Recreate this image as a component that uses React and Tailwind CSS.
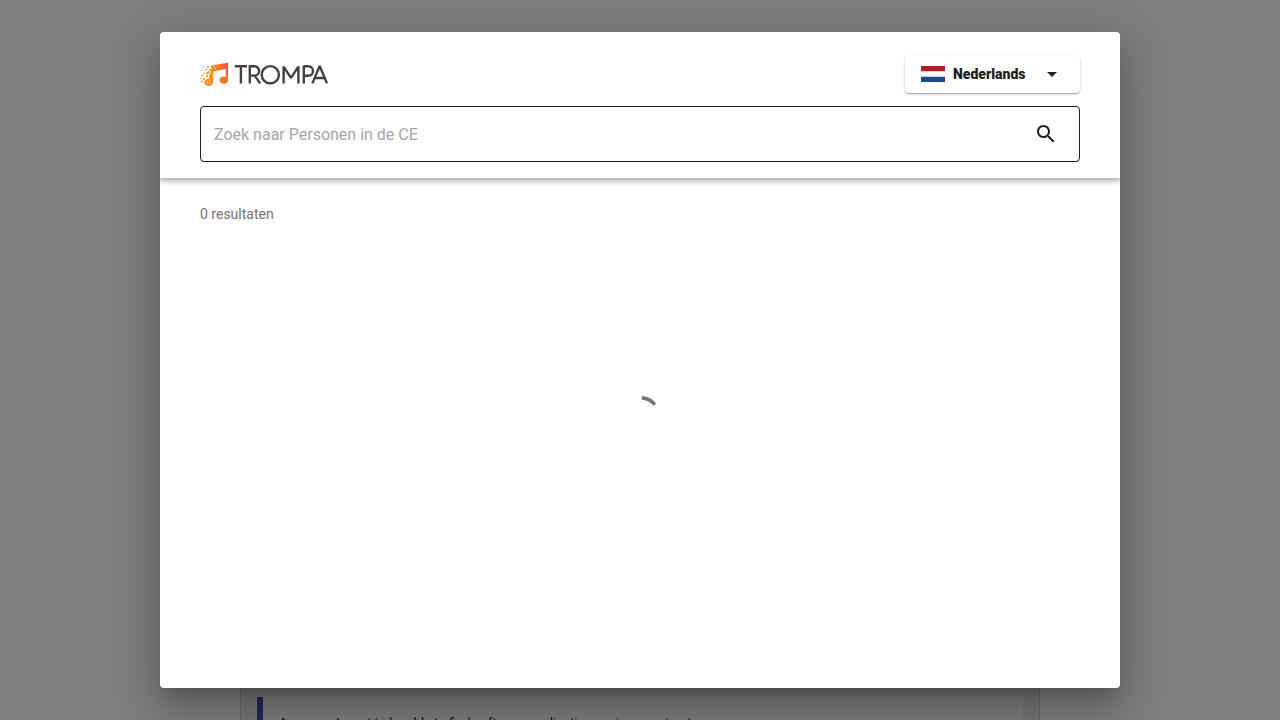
import React from "react";

function Logo() {
  return (
    <svg viewBox="0 0 128 24" className="h-6 w-32" role="img" aria-label="TROMPA">
      <defs>
        <linearGradient id="note" x1="0" y1="0.6" x2="1" y2="0.3">
          <stop offset="0" stopColor="#fd9a10" />
          <stop offset="0.5" stopColor="#fb8424" />
          <stop offset="1" stopColor="#f65a34" />
        </linearGradient>
      </defs>
      <path
        fill="url(#note)"
        d="M11 3.6 28 .8v17.7a4.3 3.7 0 1 1-2.2-3.6V7L13.2 9.6v10.2a4.5 4.2 0 0 1-8.8 1.2c-.4-2.6 1.8-4.4 4.4-4.6l1.2-6.4 1-1z"
      />
      <path
        fill="#fba02a"
        d="M7 4h2v2H7zM9 7h2v2H9zM5 7h2v1H5zM3 5h1v1H3zM1 8h1v1H1zM6 10h2v2H6zM3 11h2v1H3zM1 13h2v1H1zM6 13h2v2H6zM0 16h1v1H0zM3 16h2v2H3zM1 19h2v1H1zM4 20h2v2H4zM8 9h1v3H8z"
      />
      <path fill="#fff" opacity=".7" d="M11 6h1v1h-1zM13 4h1v1h-1zM15 6h1v1h-1zM10 11h1v1h-1zM8 14h1v1H8zM9 18h1v1H9zM7 20h1v1H7z" />
      <g fill="none" stroke="#404143" strokeWidth="2.4">
        <path d="M34.8 4.2H47M40.9 4.2V21.4M49.8 21.4V4.2h4.6a4.7 4.7 0 0 1 0 9.4h-4.6M54.6 13.6 60.2 21.4" />
        <circle cx="70.3" cy="12.7" r="8.6" />
        <path
          strokeLinejoin="bevel"
          d="M83.6 21.4V4.6l7.4 11.2 7.4-11.2v16.8M103.8 21.4V4.2h4.4a4.8 4.8 0 0 1 0 9.6h-4.4M112.4 21.4l7.3-17.4 7.3 17.4M115 16h9.6"
        />
      </g>
    </svg>
  );
}

function Flag() {
  return (
    <svg viewBox="0 0 24 16" className="h-4 w-6" aria-hidden="true">
      <path fill="#fff" d="M0 0h24v16H0z" />
      <path fill="#ae1c28" d="M0 0h24v5.33H0z" />
      <path fill="#21468b" d="M0 10.67h24V16H0z" />
    </svg>
  );
}

export default function App() {
  return (
    <div className="relative h-screen overflow-hidden bg-white pt-[120px] font-[Roboto,sans-serif] text-[#212121]">
      <main className="mx-auto max-w-[800px] border border-[#cccccc] bg-[#ebebeb] px-4 pt-[576px] pb-4">
        <blockquote className="border-l-6 border-[#3f51b5] bg-[#f8f8f8] py-4 pl-4 text-[13px] leading-5">
          As a user I want to be able to find software applications using construct
        </blockquote>
      </main>
      <div className="absolute inset-0 flex items-center justify-center bg-black/50 p-8">
        <section
          role="dialog"
          aria-modal="true"
          aria-label="TROMPA"
          className="flex h-full w-full max-w-[960px] flex-col overflow-hidden rounded bg-white shadow-[0_11px_15px_-7px_rgba(0,0,0,0.2),0_24px_38px_3px_rgba(0,0,0,0.14),0_9px_46px_8px_rgba(0,0,0,0.12)]"
        >
          <header className="px-10 pt-6 pb-4 shadow-[0_2px_4px_-1px_rgba(0,0,0,0.2),0_4px_5px_0_rgba(0,0,0,0.14),0_1px_10px_0_rgba(0,0,0,0.12)]">
            <div className="flex items-start justify-between">
              <div className="pt-1.5">
                <Logo />
              </div>
              <button
                type="button"
                className="flex min-w-[175px] items-center rounded bg-white px-4 pt-1.5 pb-[7px] text-sm font-black shadow-[0_1px_3px_0_rgba(0,0,0,0.2),0_1px_1px_0_rgba(0,0,0,0.14),0_2px_1px_-1px_rgba(0,0,0,0.12)]"
              >
                <Flag />
                <span className="ml-2">Nederlands</span>
                <svg viewBox="0 0 24 24" className="ml-auto size-6" fill="currentColor" aria-hidden="true">
                  <path d="M7 10l5 5 5-5z" />
                </svg>
              </button>
            </div>
            <form className="mt-[13px] flex h-14 items-center rounded border border-[#212121] pr-[21px] pl-[13px]">
              <input
                type="search"
                aria-label="Zoek naar Personen in de CE"
                placeholder="Zoek naar Personen in de CE"
                className="min-w-0 flex-1 bg-transparent pt-px text-base outline-none placeholder:text-[#a6a6a6]"
              />
              <button type="button" aria-label="Zoek">
                <svg viewBox="0 0 24 24" className="size-6" fill="currentColor" aria-hidden="true">
                  <path d="M15.5 14h-.79l-.28-.27C15.41 12.59 16 11.11 16 9.5 16 5.91 13.09 3 9.5 3S3 5.91 3 9.5 5.91 16 9.5 16c1.61 0 3.09-.59 4.23-1.57l.27.28v.79l5 4.99L20.49 19l-4.99-5zm-6 0C7.01 14 5 11.99 5 9.5S7.01 5 9.5 5 14 7.01 14 9.5 11.99 14 9.5 14z" />
                </svg>
              </button>
            </form>
          </header>
          <div className="flex-1 px-10 pt-[26px]">
            <p className="text-sm text-[#757575]">0 resultaten</p>
            <div className="mt-[172px] flex justify-center">
              <svg viewBox="0 0 40 40" className="size-10" role="progressbar" aria-label="Laden">
                <path d="M21.8 1.9A18.2 18.2 0 0 1 34.8 8.6" fill="none" stroke="#757575" strokeWidth="3.6" />
              </svg>
            </div>
          </div>
        </section>
      </div>
    </div>
  );
}
